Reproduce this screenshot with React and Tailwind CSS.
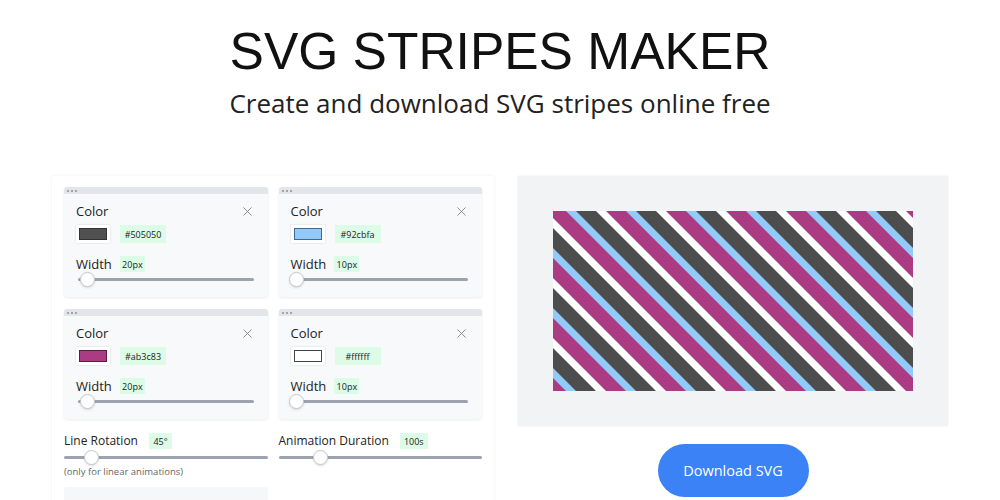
import { X } from 'lucide-react'

const stripes = [
  { color: '#505050', hex: '#505050', width: '20px', border: 'border-[#333]', thumb: 'left-[2px]' },
  { color: '#92cbfa', hex: '#92cbfa', width: '10px', border: 'border-[#3d6a94]', thumb: 'left-[-4px]' },
  { color: '#ab3c83', hex: '#ab3c83', width: '20px', border: 'border-[#5a1d44]', thumb: 'left-[2px]' },
  { color: '#ffffff', hex: '#ffffff', width: '10px', border: 'border-[#444]', thumb: 'left-[-4px]' },
]

const swatchBg = {
  '#505050': 'bg-[#505050]',
  '#92cbfa': 'bg-[#92cbfa]',
  '#ab3c83': 'bg-[#ab3c83]',
  '#ffffff': 'bg-[#ffffff]',
}

function Badge({ children, className = '' }) {
  return (
    <span className={`inline-flex items-center justify-center bg-[#dcfce7] text-[#222] text-[9px] leading-none ${className}`}>
      {children}
    </span>
  )
}

function Slider({ thumb, className = '' }) {
  return (
    <div className={`relative h-[3px] rounded-full bg-[#9ca3af] ${className}`}>
      <div className={`absolute top-[-6px] ${thumb} h-[15px] w-[15px] rounded-full bg-white border border-[#c4c8ce] shadow-sm`} />
    </div>
  )
}

function StripeCard({ s }) {
  return (
    <div className="bg-[#f8f9fa] rounded-[3px] shadow-[0_1px_3px_rgba(0,0,0,0.08)] h-[110px] flex flex-col">
      <div className="h-[7px] bg-[#e3e5e9] rounded-t-[3px] flex items-center gap-[2px] pl-[3px]">
        <span className="w-[2px] h-[2px] rounded-full bg-[#8a8f98]" />
        <span className="w-[2px] h-[2px] rounded-full bg-[#8a8f98]" />
        <span className="w-[2px] h-[2px] rounded-full bg-[#8a8f98]" />
      </div>
      <div className="px-3 pt-[10px] flex-1">
        <div className="flex items-center justify-between">
          <span className="text-[13px] text-[#222] leading-none">Color</span>
          <X className="h-[15px] w-[15px] text-[#777] mr-[1px]" strokeWidth={1.3} />
        </div>
        <div className="flex items-center mt-[6px]">
          <div className="w-[34px] h-[18px] bg-white shadow-[0_0_2px_rgba(0,0,0,0.15)] flex items-center justify-center">
            <div className={`w-[28px] h-[12px] border ${s.border} ${swatchBg[s.color]}`} />
          </div>
          <Badge className="ml-[10px] w-[46px] h-[18px]">{s.hex}</Badge>
        </div>
        <div className="flex items-center mt-[13px]">
          <span className="text-[13px] text-[#222] leading-none">Width</span>
          <Badge className="ml-[8px] w-[25px] h-[16px]">{s.width}</Badge>
        </div>
        <Slider thumb={s.thumb} className="mt-[6px] mx-[2px]" />
      </div>
    </div>
  )
}

function StripesPreview() {
  return (
    <svg width="360" height="180" viewBox="0 0 360 180" className="block">
      <defs>
        <pattern id="stripes" width="60" height="60" patternUnits="userSpaceOnUse" patternTransform="skewX(45)">
          <rect x="0" y="0" width="13" height="60" fill="#ab3c83" />
          <rect x="13" y="0" width="10" height="60" fill="#92cbfa" />
          <rect x="23" y="0" width="20" height="60" fill="#4d4d4d" />
          <rect x="43" y="0" width="10" height="60" fill="#ffffff" />
          <rect x="53" y="0" width="7" height="60" fill="#ab3c83" />
        </pattern>
      </defs>
      <rect width="360" height="180" fill="url(#stripes)" />
    </svg>
  )
}

export default function App() {
  return (
    <div className="w-[1000px] h-[500px] overflow-hidden bg-white" style={{ fontFamily: '"Open Sans", "Noto Sans", sans-serif' }}>
      <header className="text-center pt-[22px]">
        <h1 className="text-[51.5px] leading-[58px] text-[#111]" style={{ fontFamily: '"Liberation Sans", Arial, sans-serif' }}>
          SVG STRIPES MAKER
        </h1>
        <p className="text-[26px] leading-[34px] text-[#222] mt-[6px]">Create and download SVG stripes online free</p>
      </header>

      <main className="w-[896px] mx-auto mt-[56px] flex gap-[24px] items-start">
        <section className="w-[442px] h-[340px] px-3 pt-[11px] shadow-[0_0_3px_rgba(0,0,0,0.07)]">
          <div className="grid grid-cols-2 gap-x-[11px] gap-y-[12px]">
            {stripes.map((s) => (
              <StripeCard key={s.hex} s={s} />
            ))}
          </div>
          <div className="grid grid-cols-2 gap-x-[11px] mt-[14px]">
            <div>
              <div className="flex items-center">
                <span className="text-[12px] text-[#222] leading-none">Line Rotation</span>
                <Badge className="ml-[11px] w-[23px] h-[16px]">45°</Badge>
              </div>
              <Slider thumb="left-[20px]" className="mt-[7px]" />
              <p className="text-[9.5px] text-[#666] mt-[8px] leading-none">(only for linear animations)</p>
            </div>
            <div>
              <div className="flex items-center">
                <span className="text-[12px] text-[#222] leading-none">Animation Duration</span>
                <Badge className="ml-[11px] w-[28px] h-[16px]">100s</Badge>
              </div>
              <Slider thumb="left-[34px]" className="mt-[7px]" />
            </div>
          </div>
          <div className="mt-[10px] w-[204px] h-[30px] bg-[#f6f7f8] rounded-[3px]" />
        </section>

        <section className="w-[430px] flex flex-col items-center">
          <div className="w-full h-[250px] bg-[#f2f3f5] shadow-[0_0_2px_rgba(0,0,0,0.08)] flex items-center justify-center">
            <StripesPreview />
          </div>
          <button className="mt-[18px] w-[151px] h-[53px] rounded-full bg-[#3b82f6] text-white text-[14.5px]">
            Download SVG
          </button>
        </section>
      </main>
    </div>
  )
}
